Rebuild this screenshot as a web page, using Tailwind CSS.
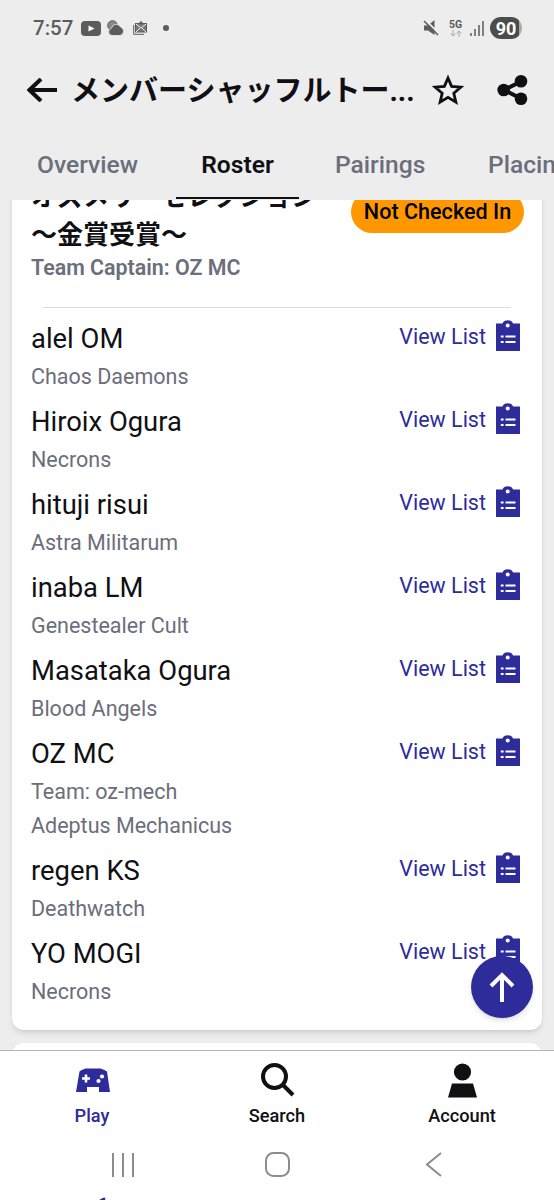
<!DOCTYPE html>
<html lang="ja">
<head>
  <meta charset="UTF-8">
  <meta name="viewport" content="width=device-width, initial-scale=1.0">
  <title>Roster</title>
  <script src="https://cdn.jsdelivr.net/npm/@tailwindcss/browser@4"></script>
</head>
<body class="bg-[#ededed] font-['Roboto','Noto_Sans_CJK_JP',sans-serif] text-[#101014]">
  <!-- Shared icons -->
  <svg class="hidden">
    <symbol id="clipboard" viewBox="0 0 24 31">
      <path fill="#2e2b9b" d="M0 3.500h6.500a5.500 4.500 0 0 1 10.500 0H24V31H0z"/>
      <circle cx="11.700" cy="5.500" r="2" fill="#fff"/>
      <path stroke="#fff" stroke-width="2.200" d="M4.800 16.500h2.800M9.500 16.500h10M4.800 22h2.800M9.500 22h10"/>
    </symbol>
  </svg>

  <div class="flex h-[1200px] w-[554px] flex-col overflow-hidden">
    <header class="h-[200px] shrink-0">
      <!-- Status bar -->
      <div class="flex h-14 items-center pr-8 pl-[33px] text-[#5c5c5c]">
        <span class="w-12 pt-px text-[20.5px] font-medium">7:57</span>
        <svg class="h-[15px] w-5" viewBox="0 0 20 15"><rect width="20" height="15" rx="4" fill="#5c5c5c"/><path d="M7.500 4.500l6 3-6 3z" fill="#fff"/></svg>
        <svg class="ml-[6px] h-4 w-[17px]" viewBox="0 0 17 16"><circle cx="5.500" cy="5.500" r="4.800" fill="#888" stroke="#5c5c5c"/><path d="M5 15.500a3.700 3.700 0 0 1-.5-7.300 4.800 4.800 0 0 1 9-1.200 4.400 4.400 0 0 1-.5 8.500z" fill="#5c5c5c" stroke="#ededed" stroke-width=".8"/></svg>
        <svg class="ml-[9px] h-[15px] w-[15px]" viewBox="0 0 15 15" fill="none" stroke="#5c5c5c"><path d="M.7 4v9.300H11"/><rect x="2.500" y="2.500" width="11" height="8.500" fill="#777"/><path d="M3 3l5 4 5-4M3 11l4-4M13 11L9 7" stroke="#ededed"/><circle cx="8" cy="1.800" r="1.500" fill="#5c5c5c" stroke="none"/></svg>
        <span class="ml-[15px] size-[6px] rounded-full bg-[#5c5c5c]"></span>
        <svg class="ml-auto h-4 w-4" viewBox="0 0 16 16"><path d="M1 5.500h4L11.500 0v15L5 10.500H1z" fill="#5c5c5c"/><path d="M2.500 0l14 14" stroke="#ededed" stroke-width="1.800"/><path d="M1 1l14 14" stroke="#5c5c5c" stroke-width="1.600"/></svg>
        <div class="ml-[9px] flex w-[15px] flex-col items-center">
          <span class="text-[10.5px] leading-[10px] font-bold">5G</span>
          <svg class="h-[7px] w-3" viewBox="0 0 12 7" fill="none" stroke="#a8a8a8"><path d="M3 0v6M.5 3.500L3 6l2.500-2.500M9 7V1M6.500 3.500L9 1l2.500 2.500"/></svg>
        </div>
        <svg class="ml-[7px] h-[15px] w-[14px]" viewBox="0 0 14 15" stroke="#5c5c5c" stroke-width="1.500"><path d="M1 15v-3M5 15V8M9 15V4M13 15V0"/></svg>
        <div class="ml-[6px] flex h-[22px] w-8 items-center justify-center rounded-full bg-linear-to-r from-[#4c4c4c] from-90% to-[#aaa] to-90% text-[18px] font-bold text-white">90</div>
      </div>

      <!-- Title bar -->
      <div class="flex h-[68px] items-center pl-[27px]">
        <svg class="h-6 w-[30px] shrink-0" viewBox="0 0 30 24" fill="none" stroke="#101014" stroke-width="4"><path d="M14 1L2.500 12 14 23M2.500 12H30"/></svg>
        <h1 class="ml-[14px] w-[345px] shrink-0 pt-1 text-[29px] font-bold whitespace-nowrap">メンバーシャッフルトー...</h1>
        <svg class="ml-[16px] size-[32px] shrink-0" viewBox="0 0 32 32" fill="none" stroke="#101014" stroke-width="2.800"><path d="M16 4l3.600 8.400 9.100.8-6.900 6 2.100 8.900-7.900-4.700-7.900 4.700 2.100-8.900-6.900-6 9.100-.8z"/></svg>
        <svg class="ml-[33px] h-[30px] w-[31px] shrink-0" viewBox="0 0 31 30" fill="#101014"><path d="M24 6.500L7 15l17 8.500" fill="none" stroke="#101014" stroke-width="4"/><circle cx="24" cy="6.300" r="6.300"/><circle cx="6.700" cy="15" r="6.300"/><circle cx="24" cy="23.700" r="6.300"/></svg>
      </div>

      <!-- Tabs -->
      <nav class="flex h-[76px] overflow-hidden text-[24.6px] font-medium whitespace-nowrap text-[#6b6e7b]">
        <span class="ml-[37px] w-[101px] shrink-0 pt-[23px]">Overview</span>
        <span class="ml-[38px] h-[75px] w-[123px] shrink-0 border-b-2 border-[#101014] pt-[23px] text-center font-semibold text-[#101014]">Roster</span>
        <span class="ml-[36px] w-[90px] shrink-0 pt-[23px]">Pairings</span>
        <span class="ml-[63px] pt-[23px]">Placings</span>
      </nav>
    </header>

    <main class="h-[850px] shrink-0 overflow-hidden px-3">
      <!-- Team card -->
      <section class="-mt-10 h-[870px] w-[530px] rounded-xl bg-white px-[19px] pt-[23px] shadow-md">
        <div class="flex h-[84px] items-start justify-between">
          <h2 class="-mt-[5px] text-[26px] leading-[38px] font-bold whitespace-nowrap">オズメリーセレクション<br>～金賞受賞～</h2>
          <span class="mt-[8px] -mr-px flex h-[42px] w-[173px] items-center justify-center rounded-full bg-[#ff9800] text-[21.6px] font-medium text-black">Not Checked In</span>
        </div>
        <p class="-mt-[15px] text-[21.4px] leading-8 font-semibold text-[#6b6e7b]">Team Captain: OZ MC</p>
        <div class="mx-3 mt-[23px] h-px bg-[#dcdcdc]"></div>
        <ul id="players" class="mt-[11px]"></ul>
      </section>
      <section class="mt-[13px] h-20 w-[530px] rounded-xl bg-white shadow-md"></section>
    </main>

    <button aria-label="Top" class="absolute top-[956px] left-[471px] flex size-[62px] items-center justify-center rounded-full bg-[#2e2b9b] shadow-md">
      <svg class="h-[30px] w-[26px]" viewBox="0 0 26 30" fill="none" stroke="#fff" stroke-width="4"><path d="M2 14L13 3l11 11M13 3v27"/></svg>
    </button>

    <footer class="h-[150px] shrink-0 border-t border-[#b5b5b5] bg-white">
      <!-- Bottom navigation -->
      <nav class="flex h-[81px] text-[18.2px] leading-6 font-medium">
        <div class="flex w-[184px] flex-col items-center pt-[17px] text-[#2e2b9b]">
          <svg class="ml-[2px] h-6 w-[34px]" viewBox="0 0 34 24"><path d="M3.500 3.500Q5 2 9.500 .5h15Q29 2 31 3.500L34 24H23v-5H11v5H0z" fill="#2e2b9b"/><path d="M10 6.500v8M6 10.500h8" stroke="#fff" stroke-width="2.600"/><circle cx="26" cy="8.500" r="2.100" fill="#fff"/><circle cx="22.500" cy="13" r="2.100" fill="#fff"/></svg>
          <span class="mt-3">Play</span>
        </div>
        <div class="flex w-[186px] flex-col items-center pt-3">
          <svg class="ml-px h-[34px] w-[34px]" viewBox="0 0 34 34" fill="none" stroke="#101014" stroke-width="4"><circle cx="13.500" cy="13.500" r="11.500"/><path d="M21.500 21.500L32 32"/></svg>
          <span class="mt-[7px]">Search</span>
        </div>
        <div class="flex w-[184px] flex-col items-center pt-3">
          <svg class="h-[35px] w-[29px]" viewBox="0 0 29 35" fill="#101014"><circle cx="14.500" cy="9" r="8.600"/><path d="M4 20.500h21l4 14H0z"/></svg>
          <span class="mt-[6px]">Account</span>
        </div>
      </nav>
      <!-- System navigation -->
      <div class="flex h-[65px] items-center pl-[111px]">
        <svg class="h-6 w-[23px]" viewBox="0 0 23 24" stroke="#8c8c8c" stroke-width="2"><path d="M2 0v24M12 0v24M22 0v24"/></svg>
        <svg class="ml-[131px] size-[25px]" viewBox="0 0 25 25" fill="none" stroke="#8c8c8c" stroke-width="2"><rect x="1" y="1" width="23" height="23" rx="7.500"/></svg>
        <svg class="ml-[136px] h-[25px] w-4" viewBox="0 0 16 25" fill="none" stroke="#8c8c8c" stroke-width="2"><path d="M15 1L1 12.500 15 24"/></svg>
      </div>
      <svg class="ml-[99px] h-[3px] w-2" viewBox="0 0 8 3"><path d="M0 3Q2 2 4 .8L6.500 .8 6 3z" fill="#2e2b9b"/></svg>
    </footer>
  </div>

  <script>
    const players = [
      { name: 'alel OM', info: ['Chaos Daemons'] },
      { name: 'Hiroix Ogura', info: ['Necrons'] },
      { name: 'hituji risui', info: ['Astra Militarum'] },
      { name: 'inaba LM', info: ['Genestealer Cult'] },
      { name: 'Masataka Ogura', info: ['Blood Angels'] },
      { name: 'OZ MC', info: ['Team: oz-mech', 'Adeptus Mechanicus'] },
      { name: 'regen KS', info: ['Deathwatch'] },
      { name: 'YO MOGI', info: ['Necrons'] }
    ];

    document.getElementById('players').innerHTML = players.map(p => `
      <li class="flex items-start justify-between pb-[9px]">
        <div>
          <div class="h-10 text-[27.4px] leading-[41px]">${p.name}</div>
          ${p.info.map(line => `<div class="h-[34px] text-[21.5px] leading-[35px] text-[#6b6e7b]">${line}</div>`).join('')}
        </div>
        <a class="mr-[3px] flex text-[21.5px] leading-[35px] text-[#2e2b9b]">View List
          <svg class="mt-[1px] ml-[10px] h-[31px] w-6"><use href="#clipboard"/></svg>
        </a>
      </li>`).join('');
  </script>
</body>
</html>
